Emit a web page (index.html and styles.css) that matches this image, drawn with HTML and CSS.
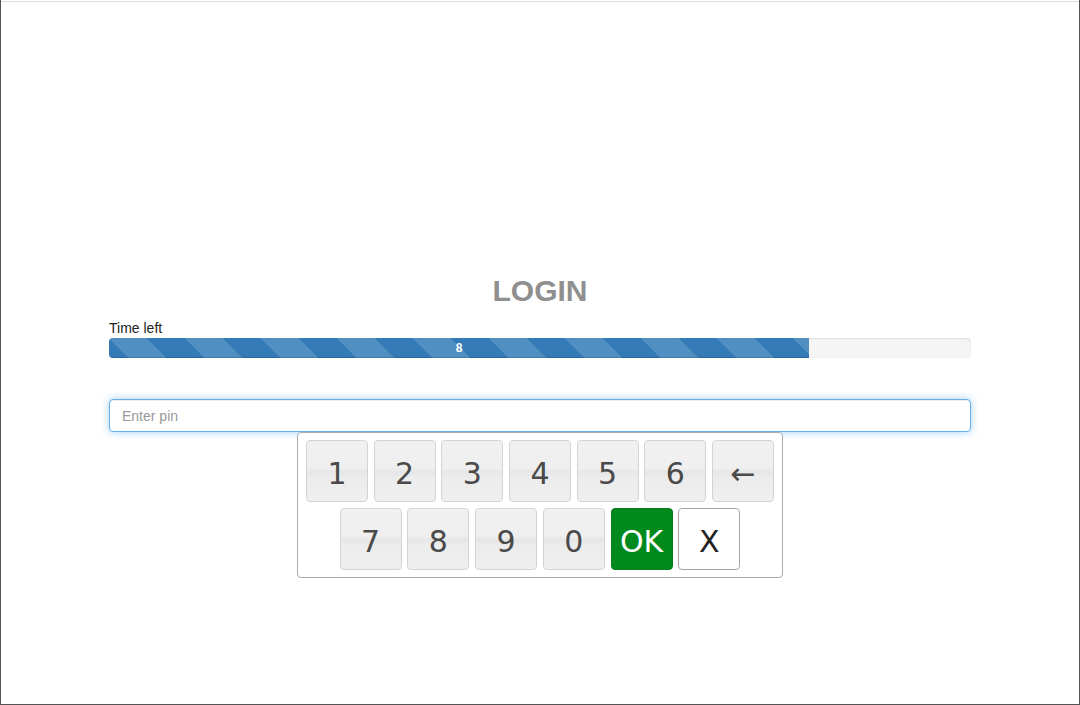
FILE: index.html
```html
<!DOCTYPE html>
<html>
<head>
<meta charset="utf-8">
<link rel="stylesheet" href="styles.css">
</head>
<body>
<div class="frame">
  <div class="topline"></div>
  <div class="container">
    <h2 class="title">LOGIN</h2>
    <div class="label">Time left</div>
    <div class="progress">
      <div class="bar" style="width: 81.2%">8</div>
    </div>
    <input class="pin" type="text" placeholder="Enter pin" autofocus>
    <div class="keyboard">
      <div class="row">
        <div class="key">1</div>
        <div class="key">2</div>
        <div class="key">3</div>
        <div class="key">4</div>
        <div class="key">5</div>
        <div class="key">6</div>
        <div class="key">←</div>
      </div>
      <div class="row">
        <div class="key">7</div>
        <div class="key">8</div>
        <div class="key">9</div>
        <div class="key">0</div>
        <div class="key ok">OK</div>
        <div class="key cancel">X</div>
      </div>
    </div>
  </div>
</div>
</body>
</html>
```

FILE: styles.css
```css
html, body {
  margin: 0;
  padding: 0;
  background: #fff;
}
body {
  font-family: "Liberation Sans", Arial, sans-serif;
  font-size: 14px;
  color: #333;
}
.frame {
  box-sizing: border-box;
  width: 1080px;
  height: 705px;
  border-left: 1px solid #555;
  border-right: 1px solid #555;
  border-bottom: 1px solid #555;
  padding-top: 1px;
}
.topline {
  height: 0;
  border-top: 1px solid #dedede;
}
.container {
  width: 862px;
  margin: 0 auto;
  padding-top: 272px;
}
.title {
  margin: 0 0 11px;
  text-align: center;
  font-size: 30px;
  line-height: 33px;
  font-weight: bold;
  color: #8f8f8f;
}
.label {
  line-height: 20px;
  font-size: 14px;
  color: #222;
}
.progress {
  height: 20px;
  background: #f5f5f5;
  border-radius: 4px;
  overflow: hidden;
  box-shadow: inset 0 1px 2px rgba(0,0,0,.1);
  margin-bottom: 41px;
}
.bar {
  height: 20px;
  background-color: #337ab7;
  background-image: linear-gradient(45deg, rgba(255,255,255,.15) 25%, transparent 25%, transparent 50%, rgba(255,255,255,.15) 50%, rgba(255,255,255,.15) 75%, transparent 75%, transparent);
  background-size: 76px 76px;
  color: #fff;
  font-size: 12px;
  font-weight: bold;
  line-height: 20px;
  text-align: center;
  box-shadow: inset 0 -1px 0 rgba(0,0,0,.15);
}
.pin {
  display: block;
  box-sizing: border-box;
  width: 862px;
  height: 33px;
  margin: 0;
  padding: 6px 12px;
  font-family: "Liberation Sans", Arial, sans-serif;
  font-size: 14px;
  color: #555;
  border: 1px solid #66afe9;
  border-radius: 4px;
  outline: 0;
  box-shadow: inset 0 1px 1px rgba(0,0,0,.075), 0 0 8px rgba(102,175,233,.6);
}
.pin::placeholder {
  color: #999;
}
.keyboard {
  box-sizing: border-box;
  width: 486px;
  margin: 0 auto;
  padding: 7px 8px;
  border: 1px solid #aaa;
  border-radius: 4px;
  background: #fff;
  display: flex;
  flex-direction: column;
  gap: 6px;
}
.row {
  display: flex;
  justify-content: center;
  gap: 5.75px;
}
.key {
  box-sizing: border-box;
  width: 62px;
  height: 62px;
  padding-top: 3px;
  border: 1px solid #d3d3d3;
  border-radius: 4px;
  background: linear-gradient(to bottom, #f1f1f1 0%, #efefef 45%, #e6e6e6 52%, #ececec 60%, #efefef 100%);
  color: #4a4a4a;
  font-family: "DejaVu Sans", Verdana, sans-serif;
  font-size: 30px;
  line-height: 60px;
  text-align: center;
}
.key.ok {
  background: #008a1e;
  border-color: #0a7a1e;
  color: #fff;
}
.key.cancel {
  background: #fff;
  border-color: #a6a6a6;
  color: #222;
}
```
